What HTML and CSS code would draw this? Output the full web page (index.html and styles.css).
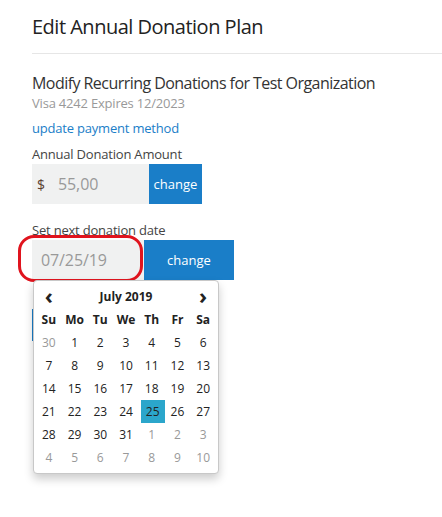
FILE: index.html
```html
<!DOCTYPE html>
<html>
<head>
<meta charset="utf-8">
<link rel="stylesheet" href="styles.css">
</head>
<body>
<div class="page">
  <h1 class="title">Edit Annual Donation Plan</h1>
  <div class="divider"></div>
  <h2 class="subtitle">Modify Recurring Donations for Test Organization</h2>
  <div class="card-info">Visa 4242 Expires 12/2023</div>
  <a class="link" href="#">update payment method</a>
  <div class="label">Annual Donation Amount</div>
  <div class="field-row">
    <div class="input amount"><span class="currency">$</span><span class="value">55,00</span></div>
    <button class="btn btn-small">change</button>
  </div>
  <div class="label label-date">Set next donation date</div>
  <div class="date-group">
    <div class="field-row">
      <div class="input date"><span class="value">07/25/19</span></div>
      <button class="btn btn-wide">change</button>
    </div>
    <div class="ring"></div>
    <div class="picker">
      <div class="grid">
        <div class="nav">&#8249;</div>
        <div class="month">July 2019</div>
        <div class="nav">&#8250;</div>
        <div class="dow">Su</div><div class="dow">Mo</div><div class="dow">Tu</div><div class="dow">We</div><div class="dow">Th</div><div class="dow">Fr</div><div class="dow">Sa</div>
        <div class="day old">30</div><div class="day">1</div><div class="day">2</div><div class="day">3</div><div class="day">4</div><div class="day">5</div><div class="day">6</div>
        <div class="day">7</div><div class="day">8</div><div class="day">9</div><div class="day">10</div><div class="day">11</div><div class="day">12</div><div class="day">13</div>
        <div class="day">14</div><div class="day">15</div><div class="day">16</div><div class="day">17</div><div class="day">18</div><div class="day">19</div><div class="day">20</div>
        <div class="day">21</div><div class="day">22</div><div class="day">23</div><div class="day">24</div><div class="day active">25</div><div class="day">26</div><div class="day">27</div>
        <div class="day">28</div><div class="day">29</div><div class="day">30</div><div class="day">31</div><div class="day old">1</div><div class="day old">2</div><div class="day old">3</div>
        <div class="day old">4</div><div class="day old">5</div><div class="day old">6</div><div class="day old">7</div><div class="day old">8</div><div class="day old">9</div><div class="day old">10</div>
      </div>
    </div>
  </div>
  <button class="btn btn-save" aria-label="Save"></button>
</div>
</body>
</html>
```

FILE: styles.css
```css
html, body {
  margin: 0;
  padding: 0;
  background: #fff;
}
body {
  font-family: "Open Sans", "Liberation Sans", sans-serif;
  color: #333;
}
.page {
  min-height: 517px;
  box-sizing: border-box;
  padding: 12px 0 0 32px;
  display: flex;
  flex-direction: column;
  align-items: flex-start;
}
.title {
  margin: 0;
  font-size: 20px;
  letter-spacing: -0.5px;
  font-weight: 400;
  line-height: 30px;
  color: #222;
}
.divider {
  align-self: stretch;
  height: 1px;
  background: #e6e6e6;
  margin-top: 11px;
}
.subtitle {
  margin: 18px 0 0;
  font-size: 16px;
  letter-spacing: -0.55px;
  font-weight: 400;
  line-height: 22px;
  color: #333;
}
.card-info {
  font-size: 13px;
  letter-spacing: -0.2px;
  line-height: 18px;
  color: #999;
}
.link {
  margin-top: 7px;
  font-size: 13px;
  letter-spacing: -0.2px;
  line-height: 18px;
  color: #1a7ec8;
  text-decoration: none;
}
.label {
  margin-top: 8px;
  font-size: 13px;
  letter-spacing: -0.2px;
  line-height: 18px;
  color: #444;
}
.label-date {
  margin-top: 17px;
}
.field-row {
  display: flex;
  margin-top: 1px;
}
.input {
  height: 40px;
  background: #f0f1f1;
  display: flex;
  align-items: center;
  box-sizing: border-box;
}
.amount {
  width: 117px;
  padding-left: 5px;
}
.currency {
  font-size: 14px;
  color: #5a4030;
  width: 21px;
}
.value {
  font-size: 16px;
  letter-spacing: -0.1px;
  color: #999;
}
.date {
  width: 112px;
  padding-left: 9px;
}
.btn {
  border: 0;
  margin: 0;
  padding: 0;
  height: 40px;
  background: #1a7ec8;
  color: #fff;
  font-family: "Open Sans", "Liberation Sans", sans-serif;
  font-size: 13px;
}
.btn-small {
  width: 53px;
}
.btn-wide {
  width: 90px;
}
.btn-save {
  margin-top: 29px;
  height: 32px;
  width: 90px;
}
.date-group {
  position: relative;
}
.ring {
  position: absolute;
  left: -14px;
  top: -4px;
  width: 125px;
  height: 47px;
  box-sizing: border-box;
  border: 3px solid #e0141e;
  border-radius: 16px;
}
.picker {
  position: absolute;
  left: 1px;
  top: 41px;
  z-index: 5;
  width: 186px;
  box-sizing: border-box;
  background: #fff;
  border: 1px solid #c8c8c8;
  border-radius: 4px;
  box-shadow: 0 5px 10px rgba(0, 0, 0, 0.2);
  padding: 4px 2px;
}
.grid {
  display: grid;
  grid-template-columns: repeat(7, 1fr);
  grid-auto-rows: 23px;
  width: 180px;
  font-size: 12px;
}
.grid > div {
  display: flex;
  align-items: center;
  justify-content: center;
}
.nav {
  font-size: 22px;
  font-weight: 700;
  color: #222;
  padding-bottom: 3px;
}
.month {
  grid-column: span 5;
  font-weight: 700;
  color: #222;
}
.dow {
  font-weight: 700;
  color: #222;
}
.day {
  color: #222;
}
.day.old {
  color: #999;
}
.day.active {
  background: #2ba6cb;
  margin: 0 0 0 2px;
}
```
